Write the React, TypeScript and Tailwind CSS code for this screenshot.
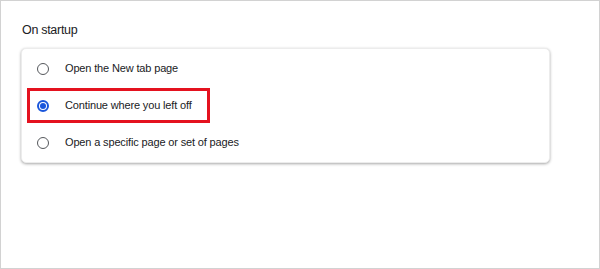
const options = [
  { label: "Open the New tab page", checked: false },
  { label: "Continue where you left off", checked: true },
  { label: "Open a specific page or set of pages", checked: false },
];

function Radio({ checked }: { checked: boolean }) {
  if (checked) {
    return (
      <span className="flex h-[12px] w-[12px] items-center justify-center rounded-full border-2 border-[#1a56db]">
        <span className="h-[6px] w-[6px] rounded-full bg-[#1a56db]" />
      </span>
    );
  }
  return <span className="block h-[12px] w-[12px] rounded-full border-[1.5px] border-[#55585c]" />;
}

export default function App() {
  return (
    <div
      className="h-[269px] w-[600px] border border-[#d2d2d2] bg-white text-[#202124]"
      style={{ fontFamily: '"Liberation Sans", Arial, sans-serif' }}
    >
      <div className="pl-[21px] pt-[21px] text-[12.5px] leading-[16px] tracking-[-0.3px]">On startup</div>
      <div className="relative ml-[20px] mt-[10px] w-[529px] rounded-[5px] border border-[#ececec] bg-white py-px shadow-[0_1px_3px_rgba(0,0,0,0.35)]">
        {options.map((o) => (
          <div key={o.label} className="flex h-[37px] items-center pl-[15px] text-[11px] tracking-[-0.15px]">
            <Radio checked={o.checked} />
            <span className="ml-[16px]">{o.label}</span>
          </div>
        ))}
        <div className="pointer-events-none absolute left-[5px] top-[39px] h-[35px] w-[183px] border-[3px] border-[#e4121f]" />
      </div>
    </div>
  );
}
